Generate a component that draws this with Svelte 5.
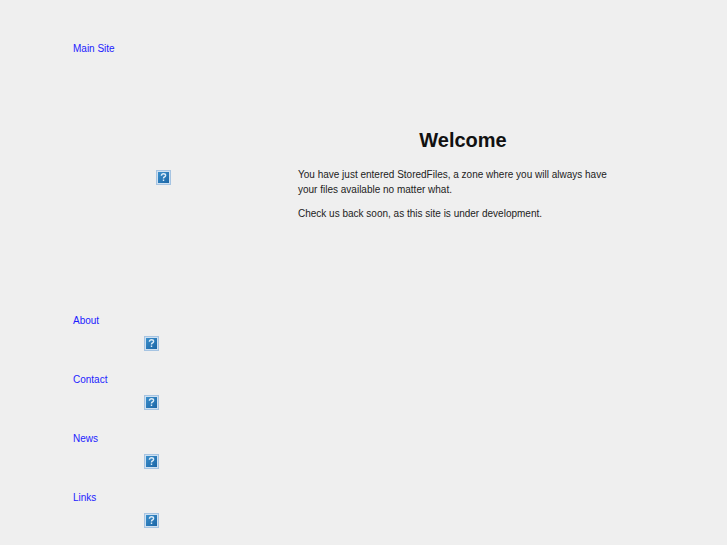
<script>
  const NAV = ['About', 'Contact', 'News', 'Links'];
</script>

{#snippet broken()}
  <svg class="icon" width="15" height="15" viewBox="0 0 15 15" aria-hidden="true">
    <defs>
      <linearGradient id="fill" x1="0" y1="0" x2="1" y2="1">
        <stop offset="0" stop-color="#3a8fcc" />
        <stop offset="1" stop-color="#1c66a6" />
      </linearGradient>
    </defs>
    <rect x="0" y="0" width="15" height="15" fill="#a6c4e2" />
    <rect x="1" y="1" width="13" height="13" fill="#cfe0f0" />
    <rect x="2" y="2" width="11" height="11" fill="url(#fill)" />
    <path d="M5.4 5.7 Q5.5 3.8 7.5 3.8 Q9.6 3.8 9.6 5.5 Q9.6 6.5 8.4 7 Q7.5 7.4 7.5 8.5" fill="none" stroke="#dcebf7" stroke-width="1.4" />
    <rect x="6.8" y="9.5" width="1.4" height="1.5" fill="#dcebf7" />
  </svg>
{/snippet}

<div class="page">
  <aside class="side">
    <a class="link" href="#main">Main Site</a>
    <div class="logo">{@render broken()}</div>
    <nav class="nav">
      {#each NAV as label}
        <div class="item">
          <a class="link" href="#{label.toLowerCase()}">{label}</a>
          <div class="thumb">{@render broken()}</div>
        </div>
      {/each}
    </nav>
  </aside>
  <main class="body">
    <h1>Welcome</h1>
    <p>You have just entered StoredFiles, a zone where you will always have your files available no matter what.</p>
    <p>Check us back soon, as this site is under development.</p>
  </main>
</div>

<style>
  :global(body) { background: #efefef; font-family: "Liberation Sans", Arial, sans-serif; }
  .page { display: flex; height: 545px; overflow: hidden; padding: 41px 0 0 73px; box-sizing: border-box; font-size: 10px; line-height: 15px; color: #222; }
  .side { width: 225px; flex: 0 0 auto; }
  .link { display: block; color: #1c1cff; text-decoration: none; }
  .logo { width: 181px; margin-top: 114px; display: flex; justify-content: center; }
  .nav { margin-top: 128px; display: flex; flex-direction: column; gap: 21px; }
  .thumb { width: 157px; margin-top: 8px; display: flex; justify-content: center; }
  .icon { display: block; }
  .body { width: 330px; padding-top: 87px; }
  h1 { margin: 0 0 15px; font-size: 20px; line-height: 24px; font-weight: bold; text-align: center; color: #111; }
  p { margin: 0 0 9px; width: 320px; }
</style>
